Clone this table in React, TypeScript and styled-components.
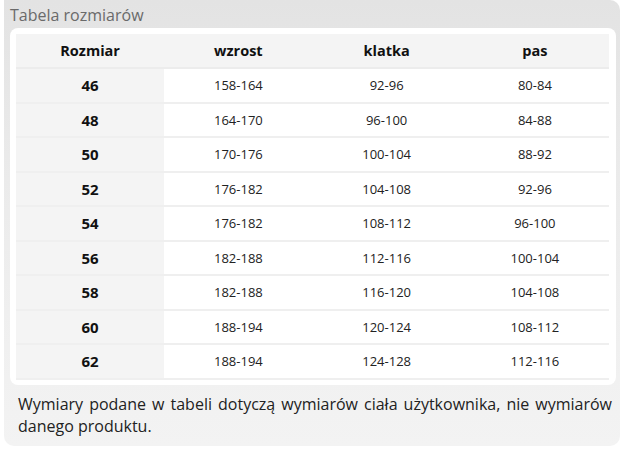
import styled, { createGlobalStyle } from 'styled-components';

const GlobalStyle = createGlobalStyle`
  body {
    margin: 0;
    background: #fff;
    font-family: 'Open Sans', 'Liberation Sans', sans-serif;
  }
`;

const rows = [
    ['46', '158-164', '92-96', '80-84'],
    ['48', '164-170', '96-100', '84-88'],
    ['50', '170-176', '100-104', '88-92'],
    ['52', '176-182', '104-108', '92-96'],
    ['54', '176-182', '108-112', '96-100'],
    ['56', '182-188', '112-116', '100-104'],
    ['58', '182-188', '116-120', '104-108'],
    ['60', '188-194', '120-124', '108-112'],
    ['62', '188-194', '124-128', '112-116']
];

const Panel = styled.div`
  margin: 0 3px 0 4px;
  width: 616px;
  height: 446px;
  box-sizing: border-box;
  padding: 0 4px 0 6px;
  border-radius: 0 10px 10px 10px;
  background: linear-gradient(to bottom, #e3e3e3 0%, #ebebeb 40%, #f3f3f3 100%);
  display: flex;
  flex-direction: column;
`;

const Title = styled.div`
  height: 28px;
  line-height: 30px;
  font-size: 16px;
  color: #6a6a6a;
`;

const Card = styled.div`
  background: #fff;
  border-radius: 8px;
  padding: 6px 7px 5px 6px;
`;

const Table = styled.table`
  width: 100%;
  border-collapse: separate;
  border-spacing: 0;
  table-layout: fixed;
`;

const HeadCell = styled.th`
  height: 33px;
  padding: 0;
  background: #f4f4f4;
  border-bottom: 2px solid #ececec;
  font-size: 14.5px;
  font-weight: 700;
  color: #111;
  text-align: center;
`;

const Cell = styled.td<{ $size?: boolean }>`
  height: 32.5px;
  padding: 0;
  border-bottom: 2px solid #efefef;
  text-align: center;
  background: ${({ $size }) => ($size ? '#f4f4f4' : '#fff')};
  font-size: ${({ $size }) => ($size ? '15px' : '13px')};
  font-weight: ${({ $size }) => ($size ? 700 : 400)};
  color: ${({ $size }) => ($size ? '#111' : '#222')};
`;

const Note = styled.p`
  margin: 0;
  padding: 8px 4px 0 8px;
  font-size: 16px;
  line-height: 22px;
  color: #222;
  text-align: justify;
`;

export default function App() {
    return (
        <>
            <GlobalStyle />
            <Panel>
                <Title>Tabela rozmiarów</Title>
                <Card>
                    <Table>
                        <thead>
                            <tr>
                                <HeadCell>Rozmiar</HeadCell>
                                <HeadCell>wzrost</HeadCell>
                                <HeadCell>klatka</HeadCell>
                                <HeadCell>pas</HeadCell>
                            </tr>
                        </thead>
                        <tbody>
                            {rows.map((row) => (
                                <tr key={row[0]}>
                                    <Cell $size>{row[0]}</Cell>
                                    <Cell>{row[1]}</Cell>
                                    <Cell>{row[2]}</Cell>
                                    <Cell>{row[3]}</Cell>
                                </tr>
                            ))}
                        </tbody>
                    </Table>
                </Card>
                <Note>
                    Wymiary podane w tabeli dotyczą wymiarów ciała użytkownika, nie wymiarów danego produktu.
                </Note>
            </Panel>
        </>
    );
}
